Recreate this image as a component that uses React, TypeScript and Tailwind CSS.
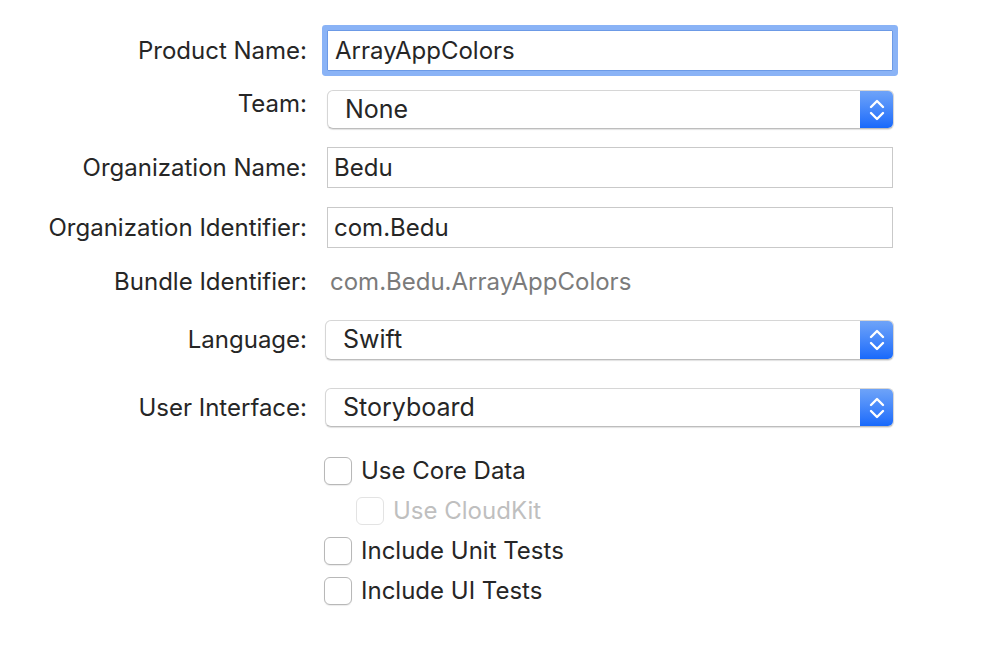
import React from "react";

const font = { fontFamily: "Inter, 'Noto Sans', 'Liberation Sans', sans-serif" };

function Label({ children, className = "" }: { children: React.ReactNode; className?: string }) {
  return (
    <div className={`w-[307px] shrink-0 text-right text-[24px] text-[#262626] ${className}`}>{children}</div>
  );
}

function Chevrons() {
  return (
    <svg width="16" height="26" viewBox="0 0 16 26" fill="none">
      <path d="M2 10 L8 4 L14 10" stroke="white" strokeWidth="2.4" strokeLinecap="round" strokeLinejoin="round" />
      <path d="M2 16 L8 22 L14 16" stroke="white" strokeWidth="2.4" strokeLinecap="round" strokeLinejoin="round" />
    </svg>
  );
}

function Popup({ value, left = "ml-[20px]", h = "h-[39px]", w = "w-[567px]" }: { value: string; left?: string; h?: string; w?: string }) {
  return (
    <div
      className={`${left} ${h} ${w} flex rounded-[6px] border border-[#d6d6d6] border-b-[#bdbdbd] bg-white shadow-[0_1px_1px_rgba(0,0,0,0.12)] overflow-hidden`}
    >
      <div className="flex-1 flex items-center pl-[17px] text-[25px] text-[#262626]">{value}</div>
      <div className="w-[33px] flex items-center justify-center bg-gradient-to-b from-[#6ea3f8] to-[#1769fb]">
        <Chevrons />
      </div>
    </div>
  );
}

function TextField({ value }: { value: string }) {
  return (
    <div className="ml-[20px] h-[41px] w-[566px] flex items-center pl-[6px] border border-[#c9c9c9] bg-white text-[24px] text-[#262626]">
      {value}
    </div>
  );
}

function Checkbox({ label, disabled = false, indent = false }: { label: string; disabled?: boolean; indent?: boolean }) {
  return (
    <div className={`h-[40px] flex items-center ${indent ? "pl-[356px]" : "pl-[324px]"}`}>
      <div
        className={`w-[28px] h-[28px] rounded-[6px] border bg-white ${
          disabled ? "border-[#e3e3e3]" : "border-[#b8b8b8] shadow-[0_1px_1px_rgba(0,0,0,0.08)]"
        }`}
      />
      <span className={`ml-[9px] text-[24px] ${disabled ? "text-[#bfbfbf]" : "text-[#262626]"}`}>{label}</span>
    </div>
  );
}

export default function App() {
  return (
    <div className="w-[1006px] h-[660px] bg-white overflow-hidden pt-[30px]" style={font}>
      {/* Product Name */}
      <div className="flex items-center h-[41px]">
        <Label>Product Name:</Label>
        <div className="ml-[20px] h-[41px] w-[566px] flex items-center pl-[7px] border border-[#6c9ae6] bg-white text-[24px] text-[#262626] rounded-[1px] shadow-[0_0_0_5px_#8ab3f6]">
          ArrayAppColors
        </div>
      </div>
      {/* Team */}
      <div className="flex items-start mt-[19px] h-[39px]">
        <Label className="leading-[28px]">Team:</Label>
        <Popup value="None" />
      </div>
      {/* Org name */}
      <div className="flex items-center mt-[18px] h-[41px]">
        <Label>Organization Name:</Label>
        <TextField value="Bedu" />
      </div>
      {/* Org Identifier */}
      <div className="flex items-center mt-[19px] h-[41px]">
        <Label>Organization Identifier:</Label>
        <TextField value="com.Bedu" />
      </div>
      {/* Bundle */}
      <div className="flex items-center mt-[14px] h-[40px]">
        <Label>Bundle Identifier:</Label>
        <div className="ml-[23px] text-[24px] text-[#7b7b7b]">com.Bedu.ArrayAppColors</div>
      </div>
      {/* Language */}
      <div className="flex items-center mt-[18px] h-[40px]">
        <Label>Language:</Label>
        <Popup value="Swift" left="ml-[18px]" h="h-[40px]" w="w-[569px]" />
      </div>
      {/* UI */}
      <div className="flex items-center mt-[28px] h-[39px]">
        <Label>User Interface:</Label>
        <Popup value="Storyboard" left="ml-[18px]" w="w-[569px]" />
      </div>
      <div className="mt-[24px]">
        <Checkbox label="Use Core Data" />
        <Checkbox label="Use CloudKit" disabled indent />
        <Checkbox label="Include Unit Tests" />
        <Checkbox label="Include UI Tests" />
      </div>
    </div>
  );
}
